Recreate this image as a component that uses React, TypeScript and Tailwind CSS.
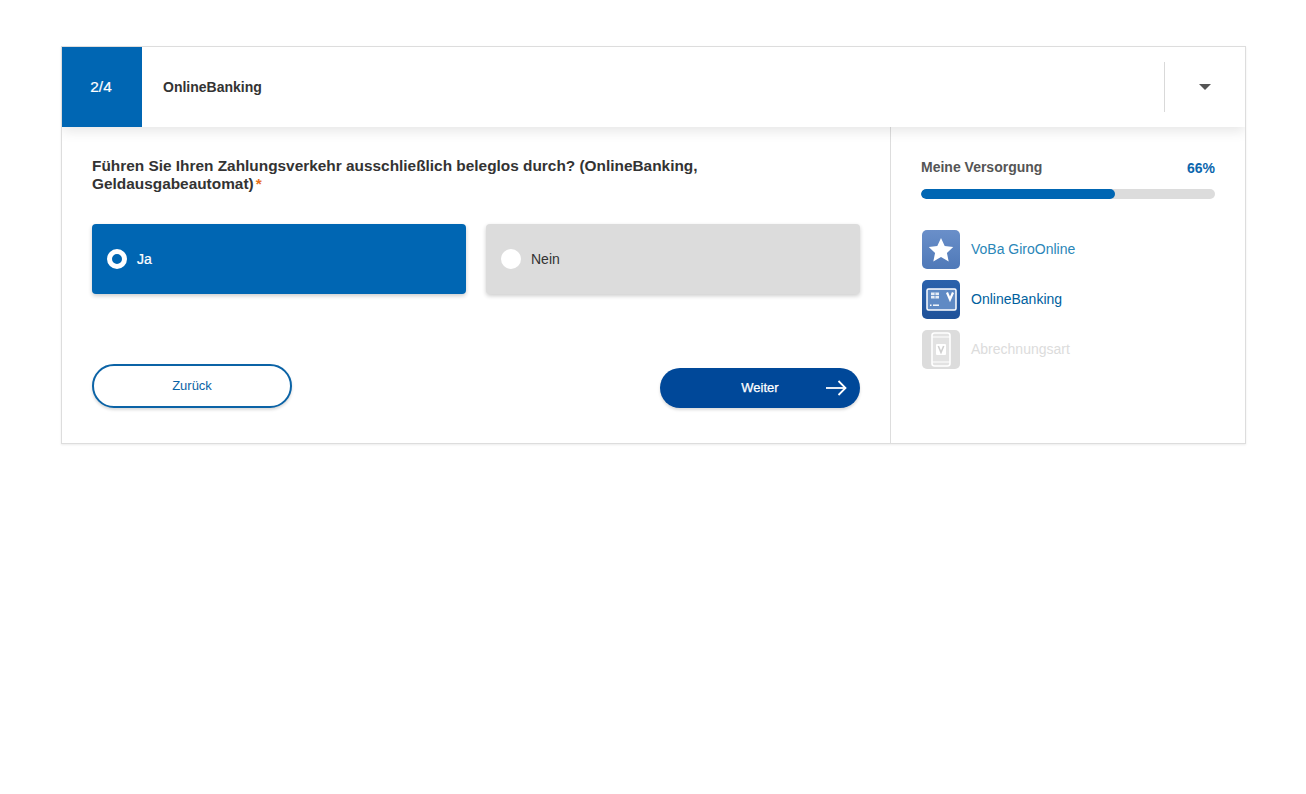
import React from "react";

function Arrow() {
  return (
    <svg width="22" height="16" viewBox="0 0 22 16" fill="none" stroke="white" strokeWidth="1.8">
      <path d="M1 8H20.5" />
      <path d="M13.5 1L20.5 8L13.5 15" />
    </svg>
  );
}

function StarIcon() {
  return (
    <div className="ml-[1px] w-[38px] h-[39px] rounded-[5px] bg-gradient-to-b from-[#6a8fc9] to-[#4f79b8] flex items-center justify-center">
      <svg width="26" height="25" viewBox="0 0 28 27">
        <path d="M14 1L18 9.8L27.2 10.8L20.4 17.2L22.3 26.4L14 21.7L5.7 26.4L7.6 17.2L0.8 10.8L10 9.8Z" fill="white" />
      </svg>
    </div>
  );
}

function CardIcon() {
  return (
    <div className="ml-[1px] w-[38px] h-[39px] rounded-[5px] bg-gradient-to-b from-[#2b62ac] to-[#1f5299] flex items-center justify-center">
      <svg width="31" height="23" viewBox="0 0 31 23">
        <rect x="1" y="1" width="29" height="21" rx="1.5" fill="#5f8ac4" stroke="white" strokeWidth="1.5" />
        <rect x="5" y="4.5" width="8" height="6" fill="#e6edf6" />
        <path d="M9 4.5V10.5M5 7.5H13" stroke="#5f8ac4" strokeWidth="0.8" />
        <path d="M21 4.5L24 11.5L27 4.5" fill="none" stroke="white" strokeWidth="2.2" />
        <rect x="4" y="16.5" width="1.5" height="1.5" fill="white" />
        <rect x="7" y="16.5" width="6" height="1.4" fill="white" />
      </svg>
    </div>
  );
}

function PhoneIcon() {
  return (
    <div className="ml-[1px] w-[38px] h-[39px] rounded-[5px] bg-[#dcdcdc] flex items-center justify-center">
      <svg width="20" height="35" viewBox="0 0 20 35">
        <rect x="1" y="1" width="18" height="33" rx="2.5" fill="#e2e2e2" stroke="white" strokeWidth="1.6" />
        <path d="M1 5H19M1 30H19" stroke="white" strokeWidth="1.2" />
        <rect x="5" y="12" width="10" height="11" rx="1" fill="white" />
        <path d="M7.3 14L10 20.5L12.7 14" fill="none" stroke="#cfcfcf" strokeWidth="1.6" />
      </svg>
    </div>
  );
}

export default function App() {
  return (
    <div className="min-h-[794px] bg-white pt-[46px] font-['Liberation_Sans',Arial,sans-serif]">
      <div className="ml-[61px] w-[1185px] h-[398px] border border-[#dddddd] shadow-[0_1px_2px_rgba(0,0,0,0.08)] flex flex-col overflow-hidden">
        <div className="relative z-10 h-[80px] shrink-0 flex items-center bg-white shadow-[0_4px_12px_rgba(0,0,0,0.1)]">
          <div className="w-[80px] h-full pr-[2px] bg-[#0066b3] text-white text-[15.4px] [-webkit-text-stroke:0.2px_white] flex items-center justify-center">2/4</div>
          <div className="ml-[21px] flex-1 text-[14px] font-bold text-[#333333]">OnlineBanking</div>
          <div className="w-[81px] h-[50px] border-l border-[#d9d9d9] flex items-center justify-center">
            <div className="w-0 h-0 border-x-[6px] border-x-transparent border-t-[6px] border-t-[#555555]" />
          </div>
        </div>
        <div className="flex-1 flex">
          <div className="w-[829px] border-r border-[#dddddd] px-[30px] pt-[30px]">
            <p className="text-[15.4px] leading-[18px] font-bold text-[#333333]">
              Führen Sie Ihren Zahlungsverkehr ausschließlich beleglos durch? (OnlineBanking, Geldausgabeautomat)
              <span className="text-[#e8711c] ml-[2px]">*</span>
            </p>
            <div className="mt-[31px] flex gap-[20px]">
              <div className="w-[374px] h-[70px] rounded-[4px] bg-[#0066b3] shadow-[0_2px_4px_rgba(0,0,0,0.2)] flex items-center pl-[15px]">
                <div className="w-[20px] h-[20px] rounded-full border-[5px] border-white" />
                <span className="ml-[10px] text-[14px] text-white [-webkit-text-stroke:0.2px_white]">Ja</span>
              </div>
              <div className="w-[374px] h-[70px] rounded-[4px] bg-[#dcdcdc] shadow-[0_2px_4px_rgba(0,0,0,0.2)] flex items-center pl-[15px]">
                <div className="w-[20px] h-[20px] rounded-full bg-white" />
                <span className="ml-[10px] text-[14px] text-[#333333]">Nein</span>
              </div>
            </div>
            <div className="mt-[70px] flex justify-between items-end">
              <button className="w-[200px] h-[44px] rounded-full border-2 border-[#0b63a6] bg-white text-[#0b63a6] text-[13px] shadow-[0_2px_3px_rgba(0,0,0,0.15)]">
                Zurück
              </button>
              <button className="relative w-[200px] h-[40px] rounded-full bg-[#004899] text-white text-[13px] [-webkit-text-stroke:0.25px_white] shadow-[0_2px_3px_rgba(0,0,0,0.15)] flex items-center justify-center">
                Weiter
                <span className="absolute right-[13px] top-[12px] flex [-webkit-text-stroke:0]"><Arrow /></span>
              </button>
            </div>
          </div>
          <div className="flex-1 px-[30px] pt-[30px]">
            <div className="flex justify-between items-center h-[20px] text-[14px] font-bold">
              <span className="text-[#555555]">Meine Versorgung</span>
              <span className="text-[#0b66ad] pt-[2px]">66%</span>
            </div>
            <div className="mt-[12px] h-[10px] rounded-full bg-[#dcdcdc] overflow-hidden">
              <div className="h-full w-[66%] rounded-full bg-[#0066b3]" />
            </div>
            <div className="mt-[31px] flex flex-col gap-[11px]">
              <div className="flex items-center gap-[11px]">
                <StarIcon />
                <span className="text-[14px] text-[#2a86b8]">VoBa GiroOnline</span>
              </div>
              <div className="flex items-center gap-[11px]">
                <CardIcon />
                <span className="text-[14px] text-[#005f9e]">OnlineBanking</span>
              </div>
              <div className="flex items-center gap-[11px]">
                <PhoneIcon />
                <span className="text-[14px] text-[#dcdcdc]">Abrechnungsart</span>
              </div>
            </div>
          </div>
        </div>
      </div>
    </div>
  );
}
